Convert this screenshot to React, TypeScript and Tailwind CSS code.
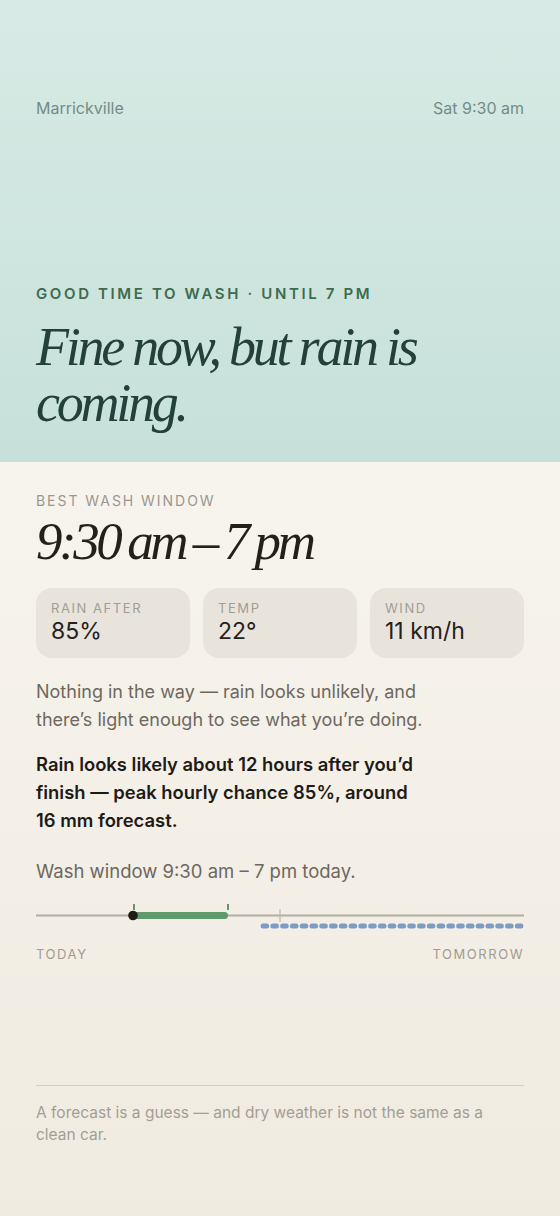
import React from "react";

const sans = { fontFamily: "Inter, 'Liberation Sans', sans-serif" };
const serif = { fontFamily: "'Liberation Serif', 'DejaVu Serif', serif" };

function Timeline() {
  const segs = [];
  const start = 224; // relative to 36 => x=260
  const end = 488;
  const n = 27;
  const step = (end - start) / n;
  for (let i = 0; i < n; i++) {
    segs.push(
      <rect key={i} x={start + i * step + 0.6} y={23.5} width={step - 1.2} height={5} rx={2.5} fill="#7d9cc3" />
    );
  }
  return (
    <svg width="488" height="30" viewBox="0 0 488 30" className="block">
      <line x1="0" y1="15.5" x2="488" y2="15.5" stroke="#b3ada2" strokeWidth="2" />
      <line x1="244" y1="9" x2="244" y2="22" stroke="#bdb7ad" strokeWidth="1.2" />
      {segs}
      <rect x="96" y="12" width="96" height="7" rx="3.5" fill="#5e9a6c" />
      <line x1="98" y1="4" x2="98" y2="10" stroke="#5e9a6c" strokeWidth="2" />
      <line x1="192" y1="4" x2="192" y2="10" stroke="#5e9a6c" strokeWidth="2" />
      <circle cx="97" cy="15.5" r="4.8" fill="#1f1b17" />
    </svg>
  );
}

function Stat({ label, value }: { label: string; value: string }) {
  return (
    <div className="flex-1 rounded-[16px] bg-[#e8e4dc] px-[15px] pt-[11px] pb-[13px]">
      <div className="text-[13px] leading-[18px] tracking-[0.12em] text-[#a29d94]">{label}</div>
      <div className="text-[23px] leading-[28px] text-[#25211c]">{value}</div>
    </div>
  );
}

export default function App() {
  return (
    <div className="w-[560px] min-h-[1216px] flex flex-col" style={sans}>
      <section className="h-[462px] bg-gradient-to-b from-[#d8eae5] to-[#c7e1da] px-9 pt-[96px]">
        <div className="flex justify-between text-[16px] leading-6 text-[#728d87]">
          <span>Marrickville</span>
          <span>Sat 9:30 am</span>
        </div>
        <div className="mt-[164px] text-[15px] leading-5 font-semibold tracking-[0.175em] text-[#3e6b4e]">
          GOOD TIME TO WASH · UNTIL 7 PM
        </div>
        <h1
          className="mt-[15px] text-[54px] leading-[56px] italic font-normal tracking-[-0.06em] text-[#23403a]"
          style={serif}
        >
          Fine now, but rain is
          <br />
          coming.
        </h1>
      </section>
      <section className="flex-1 bg-gradient-to-b from-[#f7f4ee] to-[#f0ebe0] px-9 pt-[29px] pb-[60px]">
        <div className="text-[14px] leading-5 tracking-[0.14em] text-[#9c978e]">BEST WASH WINDOW</div>
        <div
          className="mt-[2px] text-[53px] leading-[56px] italic tracking-[-0.065em] [word-spacing:-2px] text-[#231f1a]"
          style={serif}
        >
          9:30 am – 7 pm
        </div>
        <div className="mt-[19px] flex gap-[13px]">
          <Stat label="RAIN AFTER" value="85%" />
          <Stat label="TEMP" value="22°" />
          <Stat label="WIND" value="11 km/h" />
        </div>
        <p className="mt-[20px] text-[18px] leading-[28px] text-[#6d685f]">
          Nothing in the way — rain looks unlikely, and
          <br />
          there’s light enough to see what you’re doing.
        </p>
        <p className="mt-[16px] text-[18.4px] leading-[28px] font-semibold text-[#1e1b17]">
          Rain looks likely about 12 hours after you’d
          <br />
          finish — peak hourly chance 85%, around
          <br />
          16 mm forecast.
        </p>
        <p className="mt-[23px] text-[18.5px] leading-[28px] text-[#6d685f]">Wash window 9:30 am – 7 pm today.</p>
        <div className="mt-[15px]">
          <Timeline />
        </div>
        <div className="mt-[15px] flex justify-between text-[13px] leading-[18px] tracking-[0.12em] text-[#a19b91]">
          <span>TODAY</span>
          <span>TOMORROW</span>
        </div>
        <div className="mt-[122px] h-px bg-[#d5d0c6]" />
        <p className="mt-[16px] text-[15.5px] leading-[22px] text-[#a39e95]">
          A forecast is a guess — and dry weather is not the same as a
          <br />
          clean car.
        </p>
      </section>
    </div>
  );
}
